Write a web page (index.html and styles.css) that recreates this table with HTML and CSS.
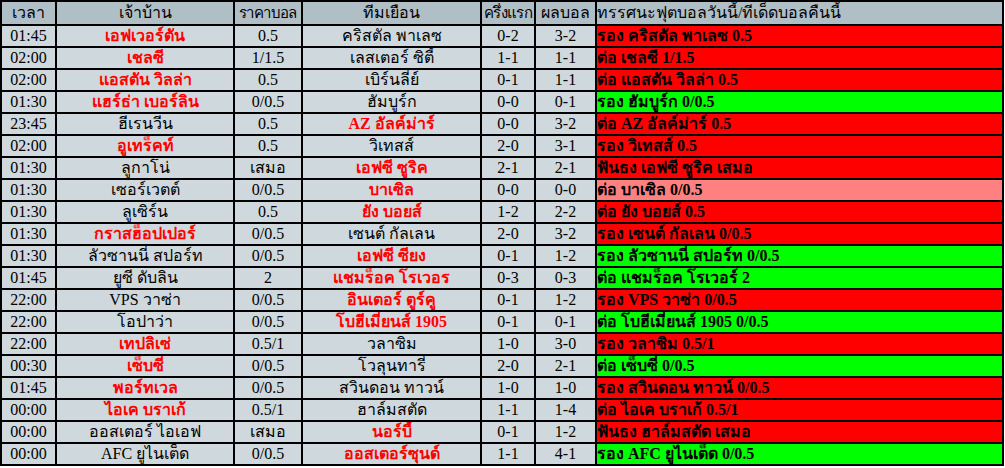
FILE: index.html
```html
<!DOCTYPE html>
<html lang="th">
<head>
<meta charset="utf-8">
<title>ทรรศนะฟุตบอล</title>
<link rel="stylesheet" href="styles.css">
</head>
<body>
<table class="tips">
<colgroup>
<col class="c-time"><col class="c-home"><col class="c-odds"><col class="c-away"><col class="c-half"><col class="c-full"><col class="c-tip">
</colgroup>
<thead>
<tr><th>เวลา</th><th>เจ้าบ้าน</th><th class="tight">ราคาบอล</th><th>ทีมเยือน</th><th class="tight">ครึ่งแรก</th><th>ผลบอล</th><th class="tip-h">ทรรศนะฟุตบอลวันนี้/ทีเด็ดบอลคืนนี้</th></tr>
</thead>
<tbody>
<tr><td>01:45</td><td class="fav">เอฟเวอร์ตัน</td><td>0.5</td><td>คริสตัล พาเลซ</td><td>0-2</td><td>3-2</td><td class="tip lose">รอง คริสตัล พาเลซ 0.5</td></tr>
<tr><td>02:00</td><td class="fav">เชลซี</td><td>1/1.5</td><td>เลสเตอร์ ซิตี้</td><td>1-1</td><td>1-1</td><td class="tip lose">ต่อ เชลซี 1/1.5</td></tr>
<tr><td>02:00</td><td class="fav">แอสตัน วิลล่า</td><td>0.5</td><td>เบิร์นลี่ย์</td><td>0-1</td><td>1-1</td><td class="tip lose">ต่อ แอสตัน วิลล่า 0.5</td></tr>
<tr><td>01:30</td><td class="fav">แฮร์ธ่า เบอร์ลิน</td><td>0/0.5</td><td>ฮัมบูร์ก</td><td>0-0</td><td>0-1</td><td class="tip win">รอง ฮัมบูร์ก 0/0.5</td></tr>
<tr><td>23:45</td><td>ฮีเรนวีน</td><td>0.5</td><td class="fav">AZ อัลค์ม่าร์</td><td>0-0</td><td>3-2</td><td class="tip lose">ต่อ AZ อัลค์ม่าร์ 0.5</td></tr>
<tr><td>02:00</td><td class="fav">อูเทร็คท์</td><td>0.5</td><td>วิเทสส์</td><td>2-0</td><td>3-1</td><td class="tip lose">รอง วิเทสส์ 0.5</td></tr>
<tr><td>01:30</td><td>ลูกาโน่</td><td>เสมอ</td><td class="fav">เอฟซี ซูริค</td><td>2-1</td><td>2-1</td><td class="tip lose">ฟันธง เอฟซี ซูริค เสมอ</td></tr>
<tr><td>01:30</td><td>เซอร์เวตต์</td><td>0/0.5</td><td class="fav">บาเซิล</td><td>0-0</td><td>0-0</td><td class="tip half">ต่อ บาเซิล 0/0.5</td></tr>
<tr><td>01:30</td><td>ลูเซิร์น</td><td>0.5</td><td class="fav">ยัง บอยส์</td><td>1-2</td><td>2-2</td><td class="tip lose">ต่อ ยัง บอยส์ 0.5</td></tr>
<tr><td>01:30</td><td class="fav">กราสฮ็อปเปอร์</td><td>0/0.5</td><td>เซนต์ กัลเลน</td><td>2-0</td><td>3-2</td><td class="tip lose">รอง เซนต์ กัลเลน 0/0.5</td></tr>
<tr><td>01:30</td><td>ลัวซานนี่ สปอร์ท</td><td>0/0.5</td><td class="fav">เอฟซี ซียง</td><td>0-1</td><td>1-2</td><td class="tip win">รอง ลัวซานนี่ สปอร์ท 0/0.5</td></tr>
<tr><td>01:45</td><td>ยูซี ดับลิน</td><td>2</td><td class="fav">แชมร็อค โรเวอร</td><td>0-3</td><td>0-3</td><td class="tip win">ต่อ แชมร็อค โรเวอร์ 2</td></tr>
<tr><td>22:00</td><td>VPS วาซ่า</td><td>0/0.5</td><td class="fav">อินเตอร์ ตูร์คู</td><td>0-1</td><td>1-2</td><td class="tip lose">รอง VPS วาซ่า 0/0.5</td></tr>
<tr><td>22:00</td><td>โอปาว่า</td><td>0/0.5</td><td class="fav">โบฮีเมี่ยนส์ 1905</td><td>0-1</td><td>0-1</td><td class="tip win">ต่อ โบฮีเมี่ยนส์ 1905 0/0.5</td></tr>
<tr><td>22:00</td><td class="fav">เทปลิเซ่</td><td>0.5/1</td><td>วลาซิม</td><td>1-0</td><td>3-0</td><td class="tip lose">รอง วลาซิม 0.5/1</td></tr>
<tr><td>00:30</td><td class="fav">เซ็บซี่</td><td>0/0.5</td><td>โวลุนทารี่</td><td>2-0</td><td>2-1</td><td class="tip win">ต่อ เซ็บซี่ 0/0.5</td></tr>
<tr><td>01:45</td><td class="fav">พอร์ทเวล</td><td>0/0.5</td><td>สวินดอน ทาวน์</td><td>1-0</td><td>1-0</td><td class="tip lose">รอง สวินดอน ทาวน์ 0/0.5</td></tr>
<tr><td>00:00</td><td class="fav">ไอเค บราเก้</td><td>0.5/1</td><td>ฮาล์มสตัด</td><td>1-1</td><td>1-4</td><td class="tip lose">ต่อ ไอเค บราเก้ 0.5/1</td></tr>
<tr><td>00:00</td><td>ออสเตอร์ ไอเอฟ</td><td>เสมอ</td><td class="fav">นอร์บี้</td><td>0-1</td><td>1-2</td><td class="tip lose">ฟันธง ฮาล์มสตัด เสมอ</td></tr>
<tr><td>00:00</td><td>AFC ยูไนเต็ด</td><td>0/0.5</td><td class="fav">ออสเตอร์ซุนด์</td><td>1-1</td><td>4-1</td><td class="tip win">รอง AFC ยูไนเต็ด 0/0.5</td></tr>
</tbody>
</table>
</body>
</html>
```

FILE: styles.css
```css
html, body {
  margin: 0;
  padding: 0;
  background: #ffffff;
}

.tips {
  table-layout: fixed;
  width: 1004px;
  border-collapse: separate;
  border-spacing: 2px;
  background: #000000;
  font-family: "Liberation Serif", "Times New Roman", serif;
  font-size: 16px;
  color: #000000;
}

.c-time { width: 53px; }
.c-home { width: 176px; }
.c-odds { width: 66px; }
.c-away { width: 177px; }
.c-half { width: 52px; }
.c-full { width: 59px; }
.c-tip  { width: 405px; }

.tips th,
.tips td {
  padding: 0;
  text-align: center;
  white-space: nowrap;
  overflow: hidden;
  line-height: 18px;
}

.tips th {
  height: 22px;
  background: #b0bec5;
  font-weight: normal;
}

.tips th.tight {
  letter-spacing: -0.6px;
  font-size: 15px;
}

.tips td {
  height: 20px;
  background: #cfd8dc;
}

.tips th.tip-h {
  text-align: left;
}

.tips td.fav {
  color: #ff0000;
  font-weight: bold;
}

.tips td.tip {
  text-align: left;
  font-weight: bold;
}

.tips td.lose { background: #ff0000; }
.tips td.win  { background: #00ff00; }
.tips td.half { background: #ff8080; }
```
